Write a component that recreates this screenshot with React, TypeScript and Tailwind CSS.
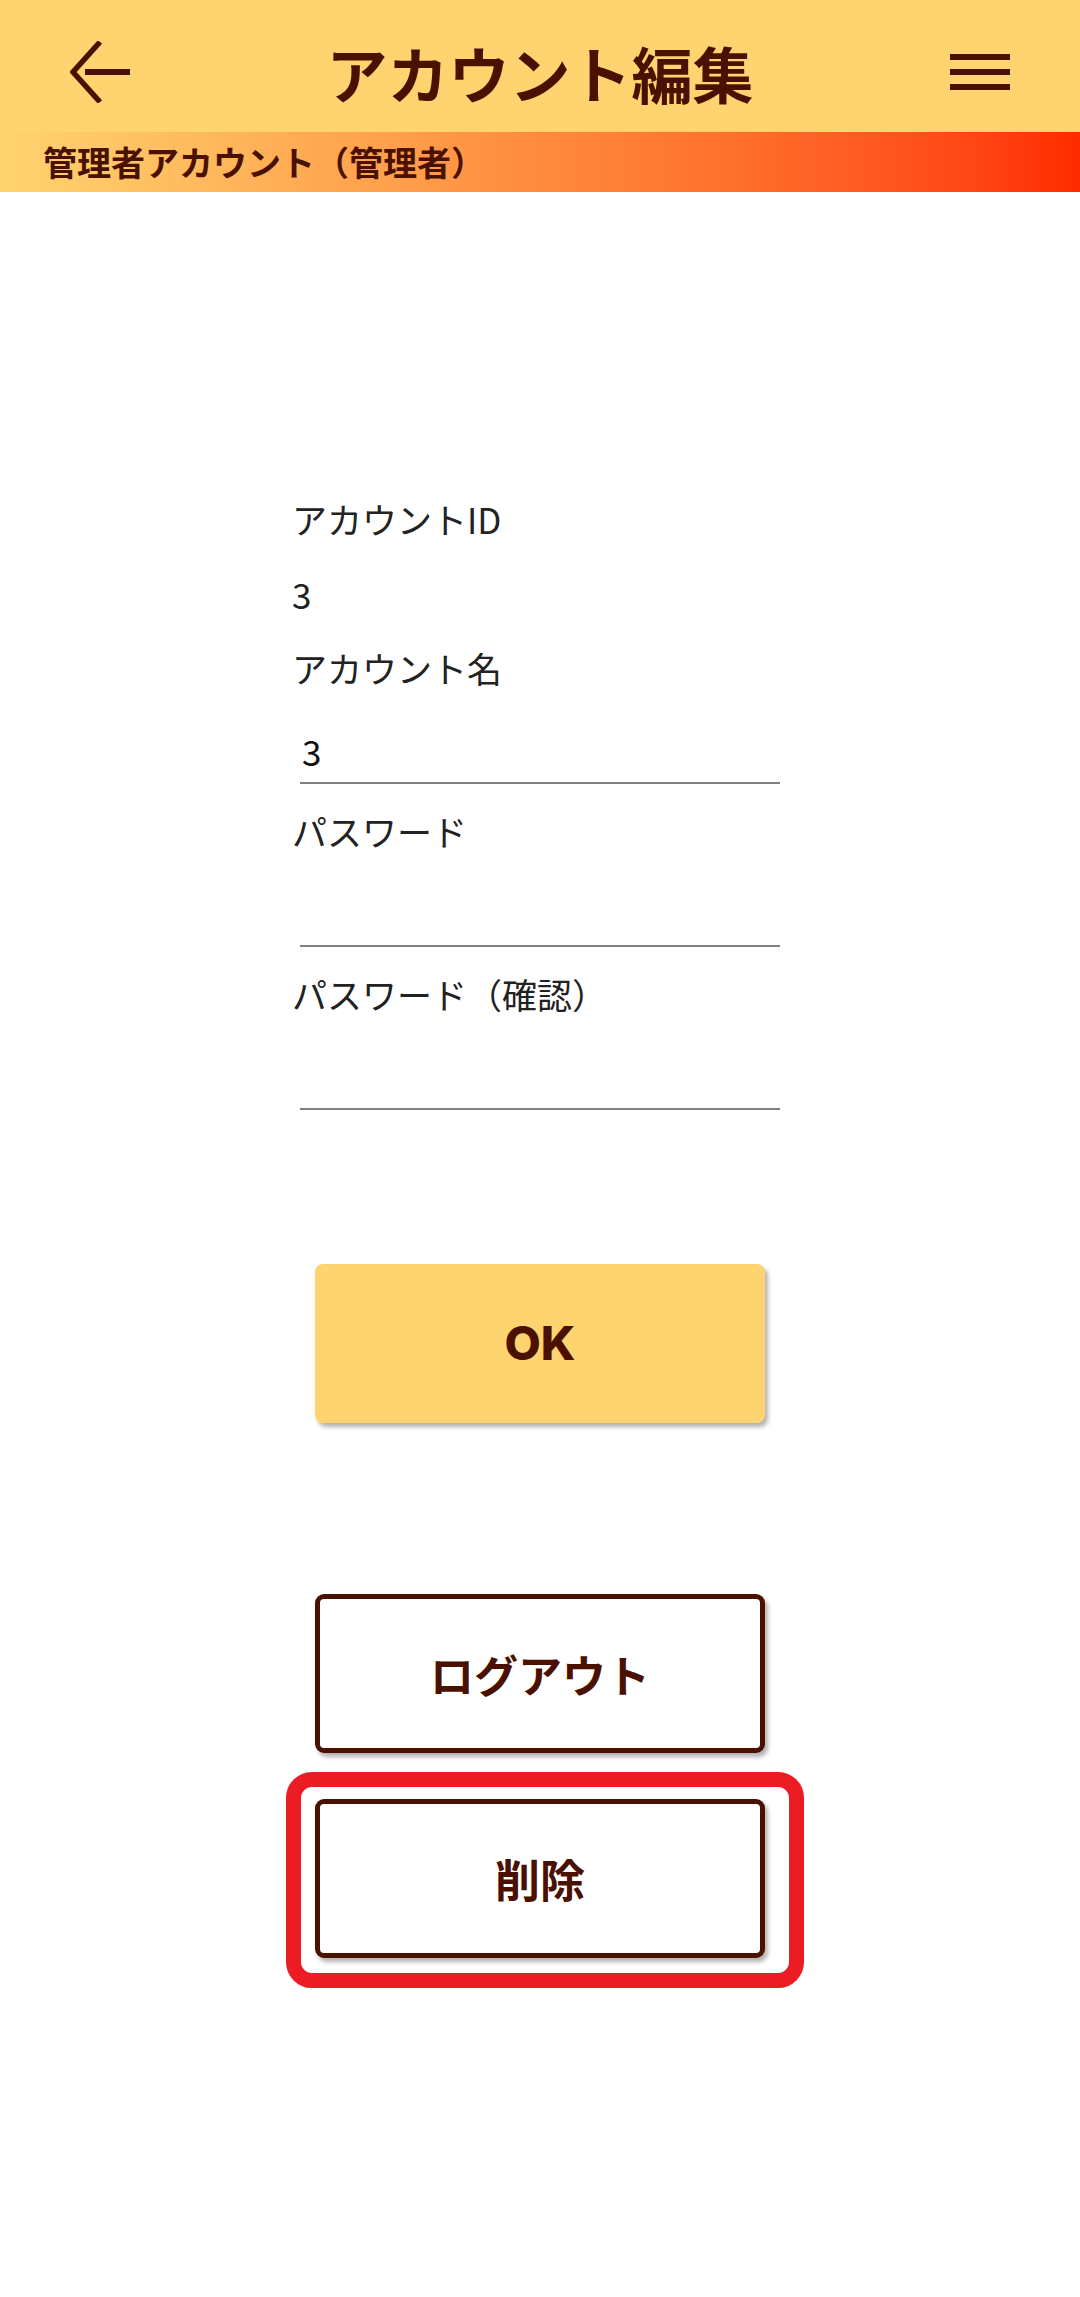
const jp = { fontFamily: '"Noto Sans CJK JP", "Noto Sans", sans-serif' };

function BackArrow() {
  return (
    <svg width="60" height="62" viewBox="0 0 60 62" fill="none">
      <path d="M30 1 L3 31 L30 61" stroke="#4A1100" strokeWidth="5.5" />
      <rect x="15" y="28" width="45" height="6" fill="#4A1100" />
    </svg>
  );
}

function MenuIcon() {
  return (
    <div className="flex w-[60px] flex-col gap-[9px]">
      <div className="h-[6px] bg-[#4A1100]" />
      <div className="h-[6px] bg-[#4A1100]" />
      <div className="h-[6px] bg-[#4A1100]" />
    </div>
  );
}

function Field({ label, value, first }: { label: string; value?: string; first?: boolean }) {
  return (
    <div className={first ? 'mt-[26px]' : 'mt-[23px]'}>
      <div className="h-[48px] text-[35px] leading-[48px] text-[#222]">{label}</div>
      <div className="mx-[8px] h-[92px] border-b-2 border-[#808080] pt-[35px]">
        <div className="h-[48px] pl-[2px] text-[35px] leading-[48px] text-[#111]">{value}</div>
      </div>
    </div>
  );
}

export default function App() {
  return (
    <div className="min-h-[2297px] w-full bg-white" style={jp}>
      <header className="flex h-[132px] items-center bg-[#FFD470] px-[70px] pt-[12px]">
        <BackArrow />
        <h1 className="flex-1 text-center text-[61px] font-bold leading-none text-[#4A1100]">
          アカウント編集
        </h1>
        <MenuIcon />
      </header>
      <div className="flex h-[60px] items-center bg-gradient-to-r from-[#FFD470] via-[#FF8A3D] to-[#FF2A00] pl-[43px]">
        <span className="text-[34px] font-bold leading-none text-[#4A1100]">
          管理者アカウント（管理者）
        </span>
      </div>

      <main className="flex flex-col items-center">
        <div className="mt-[280px] w-[496px]">
          <div className="mt-[23px] h-[48px] text-[35px] leading-[48px] text-[#222]">アカウントID</div>
          <div className="mt-[27px] h-[48px] text-[35px] leading-[48px] text-[#222]">3</div>
          <Field label="アカウント名" value="3" first />
          <Field label="パスワード" />
          <Field label="パスワード（確認）" />
        </div>

        <button className="mt-[154px] flex h-[159px] w-[450px] items-center justify-center rounded-[8px] bg-[#FED471] shadow-[3px_4px_4px_rgba(0,0,0,0.3)]">
          <span
            className="text-[47px] font-extrabold text-[#4A1100]"
            style={{ fontFamily: 'Inter, "Noto Sans", sans-serif' }}
          >
            OK
          </span>
        </button>

        <button className="mt-[171px] flex h-[159px] w-[450px] items-center justify-center rounded-[9px] border-[5px] border-[#4A1100] bg-white shadow-[3px_4px_4px_rgba(0,0,0,0.3)]">
          <span className="text-[44px] font-bold text-[#4A1100]">ログアウト</span>
        </button>

        <div className="relative mt-[46px]">
          <button className="flex h-[159px] w-[450px] items-center justify-center rounded-[9px] border-[5px] border-[#4A1100] bg-white shadow-[3px_4px_4px_rgba(0,0,0,0.3)]">
            <span className="text-[45px] font-bold text-[#4A1100]">削除</span>
          </button>
          <div className="pointer-events-none absolute -bottom-[30px] -left-[29px] -right-[39px] -top-[27px] rounded-[26px] border-[15px] border-[#EC1C24]" />
        </div>
      </main>
    </div>
  );
}
